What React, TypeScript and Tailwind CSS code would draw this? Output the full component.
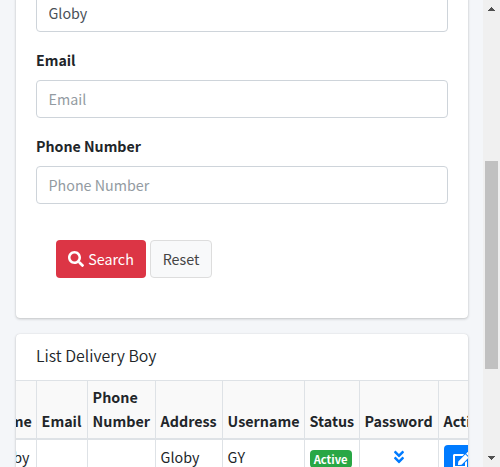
import React from "react";
import { FaSearch, FaEdit, FaAngleDoubleDown } from "react-icons/fa";

const cardShadow = "shadow-[0_0_1px_rgba(0,0,0,0.125),0_1px_3px_rgba(0,0,0,0.2)]";

function Input({ value, placeholder }: { value?: string; placeholder?: string }) {
  return (
    <input
      className="block h-[38px] w-full rounded-[4px] border border-[#ced4da] bg-white pr-3 pb-[2px] pl-[11.5px] text-[#495057] outline-none placeholder:text-[#939ba2]"
      defaultValue={value}
      placeholder={placeholder}
    />
  );
}

function Field({ label }: { label: string }) {
  return (
    <div className="mt-4">
      <label className="mb-2 block h-6 text-[14.2px] font-bold">{label}</label>
      <Input placeholder={label} />
    </div>
  );
}

const columns = [
  { title: "Name", width: "w-[51px]" },
  { title: "Email", width: "w-[51px]" },
  { title: "Phone Number", width: "w-[68px]" },
  { title: "Address", width: "w-[67px]" },
  { title: "Username", width: "w-[82px]" },
  { title: "Status", width: "w-[55px]" },
  { title: "Password", width: "w-[79px]" },
  { title: "Action", width: "w-[90px]" },
];

function Row({ cells }: { cells: React.ReactNode[] }) {
  return (
    <div className="flex h-[34px]">
      {cells.map((cell, i) => (
        <div key={i} className={`${columns[i].width} shrink-0 border-l border-[#dee2e6] pt-[5px] pl-[4.6px]`}>
          {cell}
        </div>
      ))}
    </div>
  );
}

function Scrollbar() {
  return (
    <div className="flex h-full w-[17px] shrink-0 flex-col items-center bg-[#f0f0f0]">
      <svg className="mt-[7px] h-1 w-[7px]" viewBox="0 0 7 4" shapeRendering="crispEdges">
        <path d="M3 0h1v1h1v1h1v1h1v1H0V3h1V2h1V1h1z" fill="#505050" />
      </svg>
      <div className="mt-[150px] h-[208px] w-[13px] bg-[#c1c1c1]" />
      <svg className="mt-[87px] h-1 w-[7px]" viewBox="0 0 7 4" shapeRendering="crispEdges">
        <path d="M0 0h7v1H6v1H5v1H4v1H3V3H2V2H1V1H0z" fill="#505050" />
      </svg>
    </div>
  );
}

export default function App() {
  return (
    <div className="flex h-[467px] w-[500px] overflow-hidden bg-[#f4f6f9] font-['Noto_Sans_CJK_SC','Noto_Sans',sans-serif] text-[14.3px] leading-6 text-[#212529]">
      <main className="h-full min-w-0 flex-1 overflow-hidden pr-[15px] pl-4">
        <section className={`-mt-[6px] h-[324px] rounded-[4px] bg-white px-5 ${cardShadow}`}>
          <Input value="Globy" />
          <Field label="Email" />
          <Field label="Phone Number" />
          <div className="flex gap-1 px-5 pt-9">
            <button className="flex h-[38px] w-[90px] items-center justify-center gap-1 rounded-[4px] bg-[#dc3545] text-white">
              <FaSearch size={16} />
              Search
            </button>
            <button className="h-[38px] w-[62px] rounded-[4px] border border-[#ddd] bg-[#f8f9fa] text-[#444]">
              Reset
            </button>
          </div>
        </section>

        <section className={`mt-4 h-[180px] overflow-hidden rounded-[4px] bg-white ${cardShadow}`}>
          <h3 className="flex h-[46px] items-center px-5 pb-[2px] text-[15.9px] font-[350]">List Delivery Boy</h3>
          <div className="-ml-[31px] w-[543px]">
            <div className="flex h-[60px] border-t border-b-2 border-[#dee2e6] bg-[#f9f9f9] font-bold">
              {columns.map((c) => (
                <div
                  key={c.title}
                  className={`${c.width} flex shrink-0 items-end border-l border-[#dee2e6] pb-[5px] pl-[4.6px]`}
                >
                  {c.title}
                </div>
              ))}
            </div>
            <Row
              cells={[
                "Globy",
                "",
                "",
                "Globy",
                "GY",
                <span className="mt-[5px] flex h-[18px] w-[42px] items-center justify-center rounded-[4px] bg-[#28a745] pb-px text-[11.2px] font-bold text-white">
                  Active
                </span>,
                <FaAngleDoubleDown className="mx-auto mt-[4px] mr-[31px]" size={16} color="#007bff" />,
                <span className="flex h-[31px] w-[36px] items-center justify-center rounded-[4px] bg-[#007bff] pb-[2px] text-white">
                  <FaEdit className="h-4 w-[18px]" />
                </span>,
              ]}
            />
          </div>
        </section>
      </main>
      <Scrollbar />
    </div>
  );
}
